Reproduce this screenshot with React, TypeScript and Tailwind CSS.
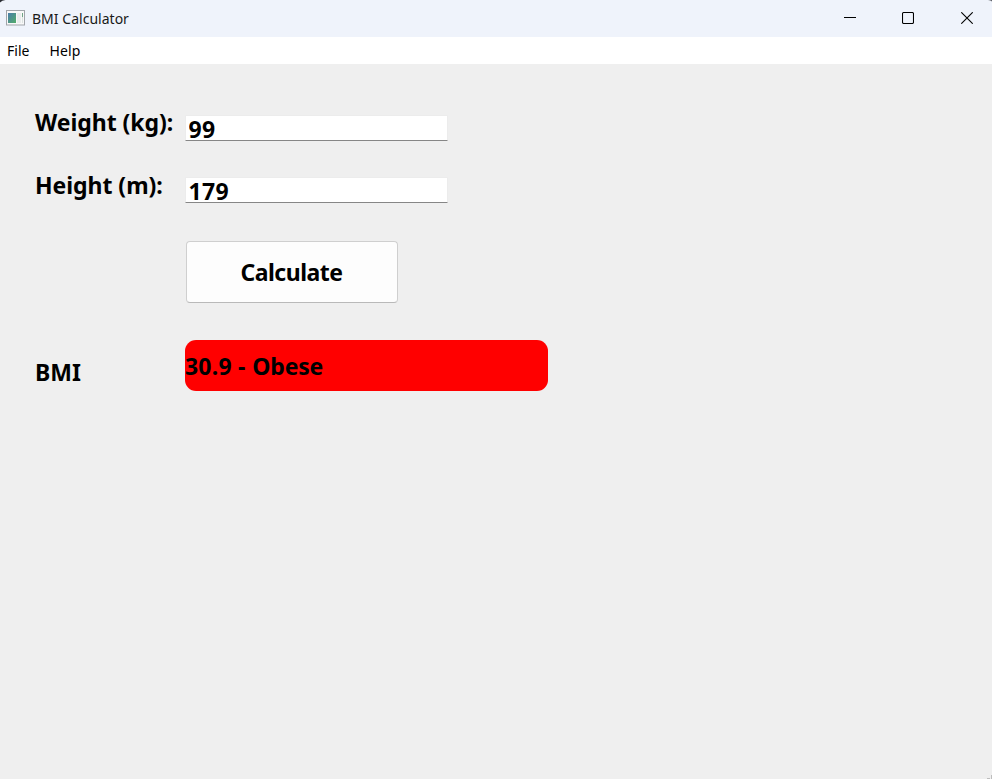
import type { ReactNode } from 'react';

function AppIcon() {
  return (
    <svg width="19" height="16" viewBox="0 0 19 16" className="block">
      <defs>
        <linearGradient id="pane" x1="0" y1="0" x2="1" y2="1">
          <stop offset="0" stopColor="#4a7dab" />
          <stop offset="1" stopColor="#52ad69" />
        </linearGradient>
      </defs>
      <rect x="0.5" y="0.5" width="18" height="14.5" fill="#f8f8f8" stroke="#a1a5aa" />
      <rect x="2" y="3" width="8" height="10" fill="url(#pane)" />
      <rect x="11" y="3" width="4" height="10" fill="#e9ecec" />
      <rect x="16" y="3" width="1" height="4" fill="#70a386" />
      <rect x="16" y="7" width="1" height="6" fill="#dce3e0" />
    </svg>
  );
}

function TitleBar() {
  return (
    <header className="flex h-[37px] shrink-0 items-start bg-[#eff3fb]">
      <div className="ml-1.5 mt-[10px]">
        <AppIcon />
      </div>
      <span className="ml-[7px] mt-[9px] text-[14px] leading-5 tracking-[0.02px] text-[#191919]">BMI Calculator</span>
      <div className="ml-auto mr-[19px] mt-3 flex gap-[46px]">
        <svg width="12" height="12" fill="none" stroke="#000" className="block">
          <path d="M0 5.5H12" />
        </svg>
        <svg width="12" height="12" fill="none" stroke="#000" className="block">
          <rect x="0.5" y="0.5" width="11" height="11" rx="1.2" strokeWidth="1.1" />
        </svg>
        <svg width="12" height="12" fill="none" stroke="#000" className="ml-px block">
          <path d="M0.3 0.3L11.7 11.7M11.7 0.3L0.3 11.7" strokeWidth="1.1" />
        </svg>
      </div>
    </header>
  );
}

function Label({ children }: { children: ReactNode }) {
  return (
    <div className="w-[150px] shrink-0">
      <span className="block whitespace-nowrap leading-8 tracking-[-0.04px]">{children}</span>
    </div>
  );
}

function Field({ value }: { value: string }) {
  return (
    <input
      defaultValue={value}
      className="block h-[26px] w-[263px] rounded-[1px] border border-[#ececec] border-b-[#868686] bg-white pb-0 pl-[2.5px] pr-[2px] pt-[2px] leading-[22px] tracking-[0.3px] outline-none"
    />
  );
}

function WindowCorners() {
  return (
    <>
      <svg width="6" height="3" className="absolute left-0 top-0">
        <path d="M0 0H5.5Q2 0.4 0 2.5Z" fill="#2b2d33" />
      </svg>
      <svg width="4" height="2" className="absolute right-0 top-0">
        <path d="M0 0H4V1.6Q2.5 0.4 0 0Z" fill="#62656c" />
      </svg>
      <svg width="5" height="5" className="absolute bottom-0 right-0" fill="#bdbdbd">
        <rect x="4" y="1" width="1" height="3" />
        <rect x="0" y="4" width="3" height="1" />
        <rect x="4" y="4" width="1" height="1" />
      </svg>
    </>
  );
}

export default function App() {
  return (
    <div className="relative flex h-[779px] w-[992px] flex-col overflow-hidden bg-[#efefef] font-['Noto_Sans',sans-serif] text-black">
      <TitleBar />
      <nav className="flex h-[27px] shrink-0 gap-5 bg-white pl-[7px] pt-1 text-[14px] leading-5">
        <span>File</span>
        <span className="tracking-[0.15px]">Help</span>
      </nav>
      <main className="flex grow flex-col pl-[35px] pt-[42px] text-[23px] font-bold">
        <div className="flex h-[63px] items-start">
          <Label>Weight (kg):</Label>
          <div className="mt-[9px]">
            <Field value="99" />
          </div>
        </div>
        <div className="flex h-[72px] items-start">
          <Label>Height (m):</Label>
          <div className="mt-[8px]">
            <Field value="179" />
          </div>
        </div>
        <button className="ml-[151px] h-[62px] w-[212px] rounded-[4px] border border-[#cfcfcf] border-b-[#b9b9b9] bg-[#fdfdfd] pr-px tracking-[-0.5px]">
          Calculate
        </button>
        <div className="mt-[37px] flex items-start">
          <div className="pt-4">
            <Label>BMI</Label>
          </div>
          <div className="flex h-[51px] w-[363px] items-center rounded-[11px] bg-[#ff0000] pt-px">
            <span>
              <span className="tracking-[0.2px]">30.9 </span>
              <span className="[word-spacing:1.5px] tracking-[-0.2px]">- Obese</span>
            </span>
          </div>
        </div>
      </main>
      <WindowCorners />
    </div>
  );
}
